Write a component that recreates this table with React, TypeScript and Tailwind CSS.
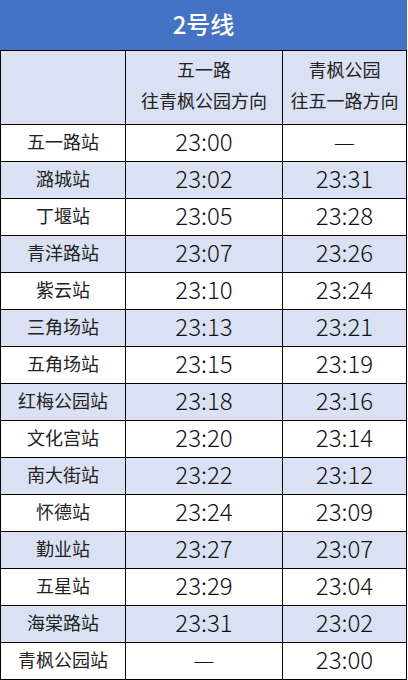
import React from 'react';

const rows: [string, string, string][] = [
  ['五一路站', '23:00', '—'],
  ['潞城站', '23:02', '23:31'],
  ['丁堰站', '23:05', '23:28'],
  ['青洋路站', '23:07', '23:26'],
  ['紫云站', '23:10', '23:24'],
  ['三角场站', '23:13', '23:21'],
  ['五角场站', '23:15', '23:19'],
  ['红梅公园站', '23:18', '23:16'],
  ['文化宫站', '23:20', '23:14'],
  ['南大街站', '23:22', '23:12'],
  ['怀德站', '23:24', '23:09'],
  ['勤业站', '23:27', '23:07'],
  ['五星站', '23:29', '23:04'],
  ['海棠路站', '23:31', '23:02'],
  ['青枫公园站', '—', '23:00'],
];

const font = { fontFamily: '"Noto Sans CJK SC", "Noto Sans", sans-serif' };

const App = () => {
  return (
    <div className="w-[408px] h-[680px] bg-white overflow-hidden" style={font}>
      {/* Title */}
      <div className="w-[407px] h-[50px] pb-[2px] bg-[#4472c4] flex items-center justify-center text-white text-[24px] font-medium">
        2号线
      </div>

      {/* Timetable */}
      <div className="w-[407px] grid grid-cols-[124px_156px_123px] gap-px p-px bg-black">
        <div className="h-[73px] bg-[#d9e1f2]" />
        <div className="h-[73px] pb-[6px] bg-[#d9e1f2] flex flex-col items-center justify-center text-[18px] leading-[31px] text-[#222]">
          <span>五一路</span>
          <span>往青枫公园方向</span>
        </div>
        <div className="h-[73px] pb-[6px] bg-[#d9e1f2] flex flex-col items-center justify-center text-[18px] leading-[31px] text-[#222]">
          <span>青枫公园</span>
          <span>往五一路方向</span>
        </div>

        {rows.map(([station, a, b], i) => {
          const bg = i % 2 === 1 ? 'bg-[#d9e1f2]' : 'bg-white';
          return (
            <React.Fragment key={station}>
              <div className={`h-[36px] pb-[4px] ${bg} flex items-center justify-center text-[18px] text-[#222]`}>
                {station}
              </div>
              <div className={`h-[36px] pb-[5px] ${bg} flex items-center justify-center text-[24px] font-light text-[#111]`}>
                {a}
              </div>
              <div className={`h-[36px] pb-[5px] ${bg} flex items-center justify-center text-[24px] font-light text-[#111]`}>
                {b}
              </div>
            </React.Fragment>
          );
        })}
      </div>
    </div>
  );
};

export default App;
